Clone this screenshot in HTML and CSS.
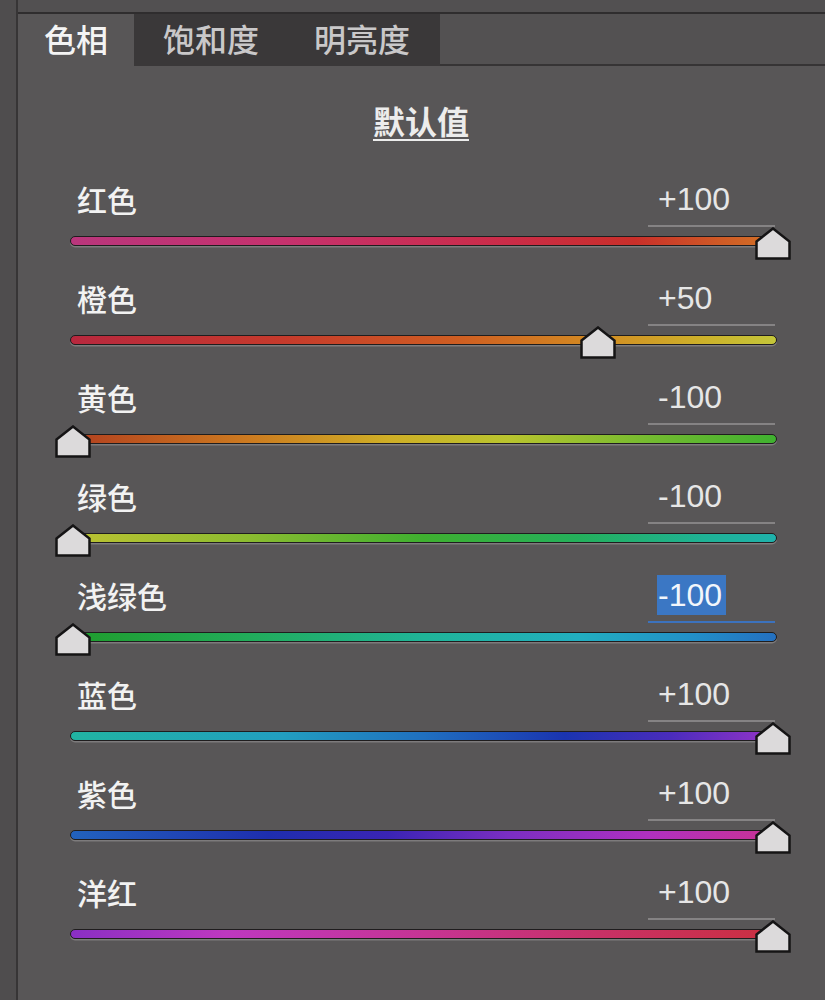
FILE: index.html
```html
<!DOCTYPE html>
<html lang="zh-CN">
<head>
<meta charset="utf-8">
<title>HSL 调整</title>
<link rel="stylesheet" href="styles.css">
</head>
<body>
<div class="window">
  <div class="side"></div>
  <div class="main">
    <div class="topbar"></div>
    <div class="tabs">
      <div class="tab active">色相</div>
      <div class="tab-group">
        <div class="tab">饱和度</div>
        <div class="tab">明亮度</div>
      </div>
      <div class="tab-fill"></div>
    </div>

    <div class="panel">
      <div class="default-row"><span class="default-link">默认值</span></div>

      <div class="slider">
        <div class="slider-head"><span class="label">红色</span><span class="value"><span class="num">+100</span></span></div>
        <div class="track hue-red"><div class="rail"><span class="thumb" style="left:100%"><svg viewBox="0 0 36 33" width="36" height="33"><polygon points="1.5,14.5 18,1.5 34.5,14.5 34.5,31.5 1.5,31.5"/></svg></span></div></div>
      </div>

      <div class="slider">
        <div class="slider-head"><span class="label">橙色</span><span class="value"><span class="num">+50</span></span></div>
        <div class="track hue-orange"><div class="rail"><span class="thumb" style="left:75%"><svg viewBox="0 0 36 33" width="36" height="33"><polygon points="1.5,14.5 18,1.5 34.5,14.5 34.5,31.5 1.5,31.5"/></svg></span></div></div>
      </div>

      <div class="slider">
        <div class="slider-head"><span class="label">黄色</span><span class="value"><span class="num">-100</span></span></div>
        <div class="track hue-yellow"><div class="rail"><span class="thumb" style="left:0%"><svg viewBox="0 0 36 33" width="36" height="33"><polygon points="1.5,14.5 18,1.5 34.5,14.5 34.5,31.5 1.5,31.5"/></svg></span></div></div>
      </div>

      <div class="slider">
        <div class="slider-head"><span class="label">绿色</span><span class="value"><span class="num">-100</span></span></div>
        <div class="track hue-green"><div class="rail"><span class="thumb" style="left:0%"><svg viewBox="0 0 36 33" width="36" height="33"><polygon points="1.5,14.5 18,1.5 34.5,14.5 34.5,31.5 1.5,31.5"/></svg></span></div></div>
      </div>

      <div class="slider">
        <div class="slider-head"><span class="label">浅绿色</span><span class="value focused"><span class="num selected">-100</span></span></div>
        <div class="track hue-aqua"><div class="rail"><span class="thumb" style="left:0%"><svg viewBox="0 0 36 33" width="36" height="33"><polygon points="1.5,14.5 18,1.5 34.5,14.5 34.5,31.5 1.5,31.5"/></svg></span></div></div>
      </div>

      <div class="slider">
        <div class="slider-head"><span class="label">蓝色</span><span class="value"><span class="num">+100</span></span></div>
        <div class="track hue-blue"><div class="rail"><span class="thumb" style="left:100%"><svg viewBox="0 0 36 33" width="36" height="33"><polygon points="1.5,14.5 18,1.5 34.5,14.5 34.5,31.5 1.5,31.5"/></svg></span></div></div>
      </div>

      <div class="slider">
        <div class="slider-head"><span class="label">紫色</span><span class="value"><span class="num">+100</span></span></div>
        <div class="track hue-purple"><div class="rail"><span class="thumb" style="left:100%"><svg viewBox="0 0 36 33" width="36" height="33"><polygon points="1.5,14.5 18,1.5 34.5,14.5 34.5,31.5 1.5,31.5"/></svg></span></div></div>
      </div>

      <div class="slider">
        <div class="slider-head"><span class="label">洋红</span><span class="value"><span class="num">+100</span></span></div>
        <div class="track hue-magenta"><div class="rail"><span class="thumb" style="left:100%"><svg viewBox="0 0 36 33" width="36" height="33"><polygon points="1.5,14.5 18,1.5 34.5,14.5 34.5,31.5 1.5,31.5"/></svg></span></div></div>
      </div>
    </div>
  </div>
</div>
</body>
</html>
```

FILE: styles.css
```css
html, body {
  margin: 0;
  padding: 0;
  background: #585657;
}

body {
  font-family: "Noto Sans CJK SC", "Noto Sans", sans-serif;
  color: #eeeeee;
}

.window {
  display: flex;
  width: 825px;
  height: 1000px;
  overflow: hidden;
}

/* narrow strip on the left edge of the window */
.side {
  width: 16px;
  flex: none;
  background: #4f4d4e;
  border-right: 2px solid #373536;
}

.main {
  flex: 1;
  display: flex;
  flex-direction: column;
  background: #585657;
}

.topbar {
  height: 12px;
  background: #525051;
  border-bottom: 2px solid #2f2d2e;
}

/* tab strip */
.tabs {
  display: flex;
  height: 52px;
}

.tab {
  display: flex;
  align-items: center;
  padding: 0 28px;
  font-size: 32px;
  font-weight: 500;
  color: #c9c8c9;
  line-height: 1;
}

.tab.active {
  width: 116px;
  box-sizing: border-box;
  padding: 0 0 4px 26px;
  color: #f4f4f4;
  background: #585657;
}

.tab-group {
  display: flex;
  background: #3a3839;
  padding-bottom: 4px;
  box-sizing: border-box;
  width: 306px;
}

.tab-group .tab {
  padding: 0 28px 0 29px;
}

.tab-group .tab + .tab {
  padding-left: 27px;
}

.tab-fill {
  flex: 1;
  background: #535152;
  border-bottom: 2px solid #363435;
}

/* slider panel */
.panel {
  padding: 0 48px 0 52px;
}

.default-row {
  display: flex;
  justify-content: center;
  margin: 34px 0 37px;
  line-height: 40px;
  padding-right: 5px;
}

.default-link {
  font-size: 32px;
  font-weight: 700;
  color: #ececec;
  text-decoration: underline;
  text-decoration-thickness: 2px;
  text-underline-offset: 5px;
}

.slider {
  height: 99px;
}

.slider-head {
  display: flex;
  justify-content: space-between;
  height: 50px;
}

.label {
  padding-left: 7px;
  font-size: 30px;
  font-weight: 500;
  line-height: 44px;
  color: #f2f2f2;
}

.value {
  width: 127px;
  margin-right: 2px;
  box-sizing: border-box;
  height: 50px;
  padding: 2px 0 0 9px;
  border-bottom: 2px solid #858384;
  display: flex;
  justify-content: flex-start;
  align-items: flex-start;
}

.value.focused {
  border-bottom-color: #3c72bd;
}

.num {
  display: block;
  font-family: "Liberation Sans", "Noto Sans", sans-serif;
  font-size: 32px;
  line-height: 40px;
  color: #e6e6e6;
  padding: 0 1px;
}

.num.selected {
  background: #3b77c4;
  color: #f2f6fb;
  padding: 0 4px 0 1px;
}

/* gradient track */
.track {
  position: relative;
  margin-top: 9px;
  height: 8px;
  border: 1px solid #1f1d1e;
  border-radius: 5px;
  box-shadow: 0 1.5px 0 #7d7b7c;
}

.rail {
  position: absolute;
  left: 2px;
  right: 3px;
  top: -10px;
  height: 33px;
}

.thumb {
  position: absolute;
  top: 0;
  width: 36px;
  height: 33px;
  transform: translateX(-50%);
}

.thumb svg {
  display: block;
}

.thumb polygon {
  fill: #dcdadb;
  stroke: #151415;
  stroke-width: 2.5;
  stroke-linejoin: miter;
}

.hue-red {
  background: linear-gradient(90deg, #b9367c 0%, #c6326e 30%, #cb2c48 62%, #c92f2a 80%, #cf5a26 92%, #d27226 100%);
}

.hue-orange {
  background: linear-gradient(90deg, #b8283e 0%, #c63a2c 30%, #cf5e22 55%, #d38a22 74%, #cdb22a 90%, #c4c63a 100%);
}

.hue-yellow {
  background: linear-gradient(90deg, #b3401f 0%, #cc7a20 25%, #cfae26 45%, #b9c42e 62%, #74bb30 82%, #3fb130 100%);
}

.hue-green {
  background: linear-gradient(90deg, #bcc232 0%, #8cbc30 25%, #3fb030 50%, #24b05c 72%, #1fb296 90%, #1fb2ac 100%);
}

.hue-aqua {
  background: linear-gradient(90deg, #1f9c2c 0%, #22ac5a 25%, #20b498 50%, #22aec0 72%, #2290c8 88%, #2470c0 100%);
}

.hue-blue {
  background: linear-gradient(90deg, #21b4a2 0%, #229ec0 30%, #2070c0 50%, #1a34b0 70%, #4a2cbc 85%, #9634c8 100%);
}

.hue-purple {
  background: linear-gradient(90deg, #2262bd 0%, #1e2eae 28%, #3a24b4 45%, #7a2ec2 62%, #b030c0 82%, #c93294 100%);
}

.hue-magenta {
  background: linear-gradient(90deg, #8a2fc4 0%, #be38c0 22%, #c63494 50%, #c83166 75%, #cb2f40 100%);
}
```
